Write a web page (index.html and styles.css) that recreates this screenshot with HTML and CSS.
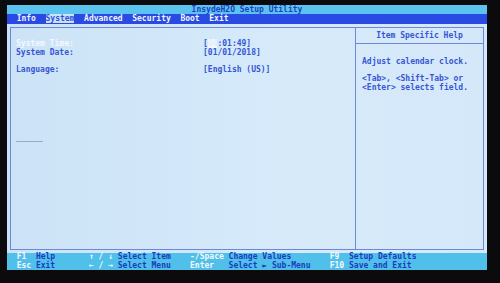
FILE: index.html
```html
<!DOCTYPE html>
<html lang="en">
<head>
<meta charset="utf-8">
<title>InsydeH2O Setup Utility</title>
<link rel="stylesheet" href="styles.css">
</head>
<body>
<div class="screen">
  <div class="title">InsydeH2O Setup Utility</div>
  <div class="menu">  Info  <span class="sel">System</span>  Advanced  Security  Boot  Exit</div>
  <div class="main">
    <div class="box">
      <div class="left">
        <div class="row"><span class="label active">System Time:</span><span class="val">[<span class="cur">00</span>:01:49]</span></div>
        <div class="row"><span class="label">System Date:</span><span class="val">[01/01/2018]</span></div>
        <div class="row blank"></div>
        <div class="row"><span class="label">Language:</span><span class="val">[English (US)]</span></div>
        <div class="smudge"></div>
      </div>
      <div class="right">
        <div class="help-head">Item Specific Help</div>
        <div class="help-body">
          <div class="line">Adjust calendar clock.</div>
          <div class="line"> </div>
          <div class="line">&lt;Tab&gt;, &lt;Shift-Tab&gt; or</div>
          <div class="line">&lt;Enter&gt; selects field.</div>
        </div>
      </div>
    </div>
  </div>
  <div class="footer">
    <div class="fline">  <span class="k">F1</span>  Help       <span class="k">↑ / ↓</span> Select Item    <span class="k">-/Space</span> Change Values        <span class="k">F9</span>  Setup Defaults</div>
    <div class="fline">  <span class="k">Esc</span> Exit       <span class="k">← / →</span> Select Menu    <span class="k">Enter</span>   Select ► Sub-Menu    <span class="k">F10</span> Save and Exit</div>
  </div>
</div>
</body>
</html>
```
FILE: styles.css
```css
html, body {
  margin: 0;
  padding: 0;
}
body {
  background: #0b0b0e;
  width: 500px;
  height: 283px;
  overflow: hidden;
  padding: 5px 0 0 7px;
  box-sizing: border-box;
  font-family: "DejaVu Sans Mono", "Liberation Mono", monospace;
  font-weight: bold;
  font-size: 8px;
}
.screen {
  width: 480px;
  height: 265px;
  display: flex;
  flex-direction: column;
}
.title {
  height: 9px;
  line-height: 9px;
  background: #5ac4ee;
  color: #1e3fc6;
  text-align: center;
  white-space: pre;
}
.menu {
  height: 10px;
  line-height: 10px;
  background: #2a4ae4;
  color: #f2f6ff;
  white-space: pre;
}
.menu .sel {
  background: #c9e3f7;
  color: #3352dc;
}
.main {
  flex: 1;
  background: linear-gradient(90deg, #cce3f7 0%, #d6eafa 60%, #d4e8f9 100%);
  padding: 3px 3px 3px 3px;
  display: flex;
}
.box {
  flex: 1;
  border: 1px solid #6f88d6;
  display: grid;
  grid-template-columns: 344px 1fr;
}
.left {
  padding: 12px 0 0 5px;
  color: #3756d4;
}
.row {
  display: flex;
  height: 8.5px;
  line-height: 8.5px;
  white-space: pre;
}
.label {
  width: 187px;
}
.label.active {
  color: #f4f8ff;
}
.val .cur {
  background: #f4f8ff;
  color: #dfeefd;
}
.smudge {
  width: 27px;
  height: 1px;
  margin-top: 67px;
  background: #8e9cb4;
  opacity: 0.8;
}
.right {
  border-left: 1px solid #6f88d6;
  color: #3756d4;
  display: flex;
  flex-direction: column;
}
.help-head {
  height: 15px;
  line-height: 15px;
  text-align: center;
  border-bottom: 1px solid #6f88d6;
}
.help-body {
  padding: 14px 0 0 6px;
}
.line {
  height: 8.5px;
  line-height: 8.5px;
  white-space: pre;
}
.footer {
  height: 17px;
  background: #50c0ea;
  color: #1a3cbc;
}
.fline {
  height: 8.5px;
  line-height: 8.5px;
  white-space: pre;
}
.fline .k {
  color: #f4f9ff;
}
```
